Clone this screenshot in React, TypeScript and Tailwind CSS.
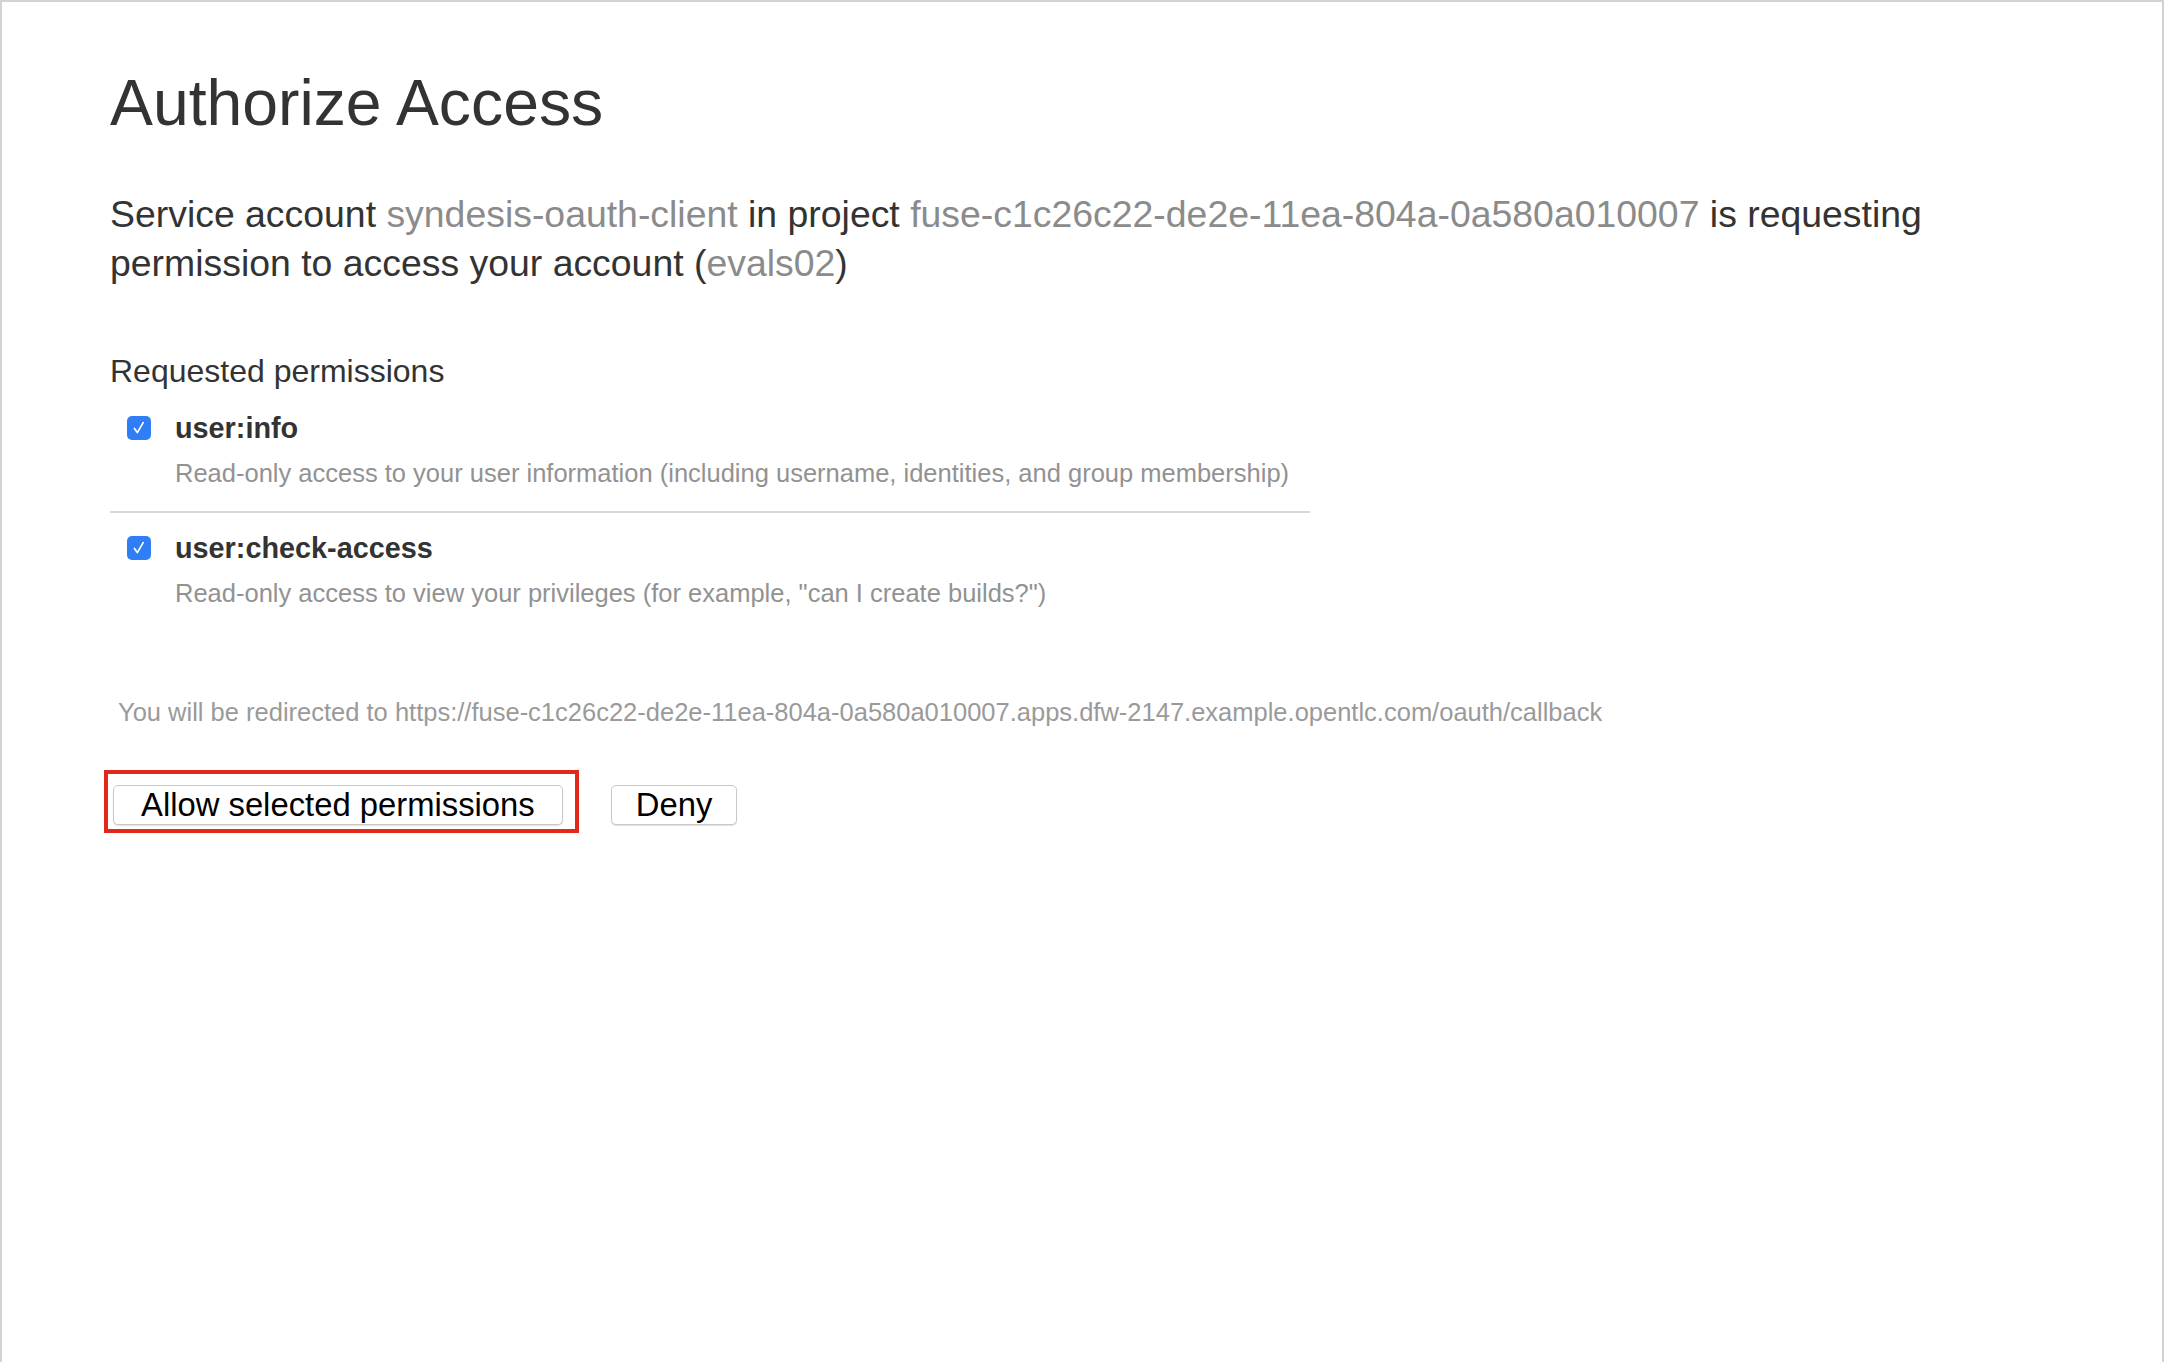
import React from 'react'

const font = { fontFamily: '"Liberation Sans", Arial, Helvetica, sans-serif' }

function Check() {
  return (
    <span className="flex h-[24px] w-[24px] shrink-0 items-center justify-center rounded-[5px] bg-[#2f7ef6]">
      <svg viewBox="0 0 24 24" className="h-[20px] w-[20px]" fill="none" stroke="white" strokeWidth="2" strokeLinecap="round" strokeLinejoin="round">
        <polyline points="6.5,12.5 10,17.5 17,5.5" />
      </svg>
    </span>
  )
}

function Permission({ name, desc }: { name: string; desc: string }) {
  return (
    <div className="flex flex-col">
      <label className="ml-[17px] flex h-[36px] items-center gap-[24px]">
        <Check />
        <span className="text-[28.8px] font-bold leading-[36px] text-[#333]">{name}</span>
      </label>
      <p className="ml-[65px] mt-[11px] text-[25.5px] leading-[32px] text-[#929292]">{desc}</p>
    </div>
  )
}

export default function App() {
  return (
    <div className="min-h-screen w-full border-t-2 border-l-2 border-r-2 border-[#d2d2d2] bg-white" style={font}>
      <div className="flex flex-col pl-[108px] pt-[65px]">
        <h1 className="h-[72px] text-[64.3px] font-normal leading-[72px] text-[#333]">Authorize Access</h1>

        <p className="mt-[51px] max-w-[1900px] text-[37.4px] leading-[49px] text-[#333]">
          Service account <span className="text-[#8b8b8b]">syndesis-oauth-client</span> in project{' '}
          <span className="text-[#8b8b8b]">fuse-c1c26c22-de2e-11ea-804a-0a580a010007</span> is requesting permission
          to access your account (<span className="text-[#8b8b8b]">evals02</span>)
        </p>

        <h3 className="mt-[63px] text-[32px] leading-[40px] text-[#333]">Requested permissions</h3>

        <div className="mt-[19px] flex w-[1200px] flex-col">
          <Permission
            name="user:info"
            desc="Read-only access to your user information (including username, identities, and group membership)"
          />
          <div className="mt-[22px] h-[2px] w-full bg-[#d6d6d6]" />
          <div className="mt-[17px]">
            <Permission
              name="user:check-access"
              desc={'Read-only access to view your privileges (for example, "can I create builds?")'}
            />
          </div>
        </div>

        <p className="ml-[8px] mt-[87px] text-[25.5px] leading-[32px] text-[#9a9a9a]">
          You will be redirected to https://fuse-c1c26c22-de2e-11ea-804a-0a580a010007.apps.dfw-2147.example.opentlc.com/oauth/callback
        </p>

        <div className="mt-[42px] flex items-start">
          <div className="-ml-[6px] border-4 border-[#e2281c] pb-[4px] pl-[5px] pr-[12px] pt-[11px]">
            <button className="h-[40px] rounded-[5px] border border-[#c9c9c9] bg-white px-[27px] text-[32.8px] leading-[38px] text-black shadow-[0_1px_1px_rgba(0,0,0,0.12)]">
              Allow selected permissions
            </button>
          </div>
          <button className="ml-[32px] mt-[15px] h-[40px] rounded-[5px] border border-[#c9c9c9] bg-white px-[24px] text-[32.8px] leading-[38px] text-black shadow-[0_1px_1px_rgba(0,0,0,0.12)]">
            Deny
          </button>
        </div>
      </div>
    </div>
  )
}
